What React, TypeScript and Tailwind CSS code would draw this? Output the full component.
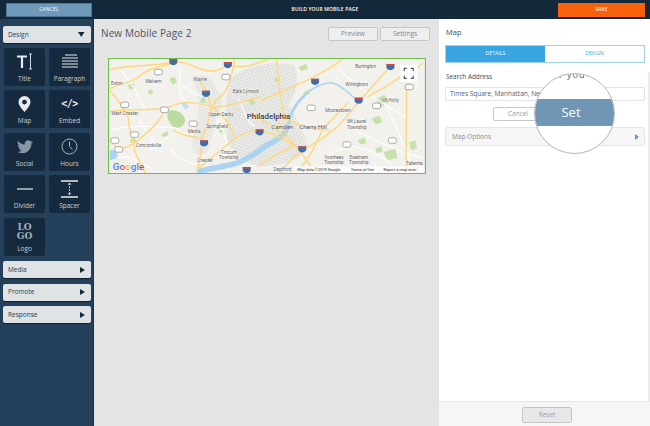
const roads = [
  "M0 11 C15 6 40 8 64 3 C80 1 90 14 105 12 C112 11 116 8 119 6 C135 10 145 6 160 0",
  "M0 30 C12 24 22 25 34 14 C44 8 55 7 64 4",
  "M0 53 C15 50 35 52 55 50 C65 46 72 43 82 44 C92 45 98 46 104 49 C122 48 136 42 152 38",
  "M90 22 C96 28 100 38 102 49 C102 60 96 70 93 80 C92 90 92 100 88 112",
  "M19 60 C18 70 24 80 25 92 C27 100 32 106 36 115",
  "M0 32 C8 40 14 50 19 60",
  "M283 8 C270 20 262 32 252 42 C244 52 236 62 229 69 C216 80 204 86 195 92 C186 98 178 106 172 115",
  "M316 4 C308 12 298 14 290 20 C280 28 270 32 260 38",
  "M152 42 C170 34 190 26 206 18 C216 12 226 8 234 0",
  "M299 29 C300 50 298 80 299 115",
  "M205 115 C200 100 190 92 180 80 C176 72 172 66 165 58",
  "M176 60 C190 68 205 70 222 72",
  "M188 115 C204 96 208 86 214 72 C224 60 232 54 240 44",
  "M88 112 C100 100 116 90 126 80 C136 74 146 70 160 74 C170 78 180 84 195 92",
  "M104 49 C112 56 120 62 126 80",
  "M64 72 C74 78 82 78 93 80",
  "M176 60 C172 40 170 20 168 0",
  "M0 80 C4 86 6 90 9 91 C25 88 30 80 40 72 C48 64 54 58 55 50",
  "M126 0 C124 14 120 26 116 34 C108 40 104 44 104 49",
  "M150 108 C160 100 170 96 184 88",
  "M150 60 C160 66 170 70 176 80",
];
const thin = [
  "M0 72 C20 66 44 68 70 70", "M12 12 C22 26 30 36 36 52", "M70 8 C72 22 66 34 78 44", "M40 92 C52 84 60 78 70 72",
  "M232 10 C244 26 268 40 300 60", "M250 74 C268 80 288 94 316 100", "M240 88 C264 90 278 98 290 114", "M276 40 C284 62 296 80 306 114",
  "M108 60 C116 74 122 86 114 100", "M60 90 C66 98 74 104 88 106", "M72 26 C80 32 86 34 92 38", "M130 40 C136 52 136 62 146 68",
  "M30 60 C34 72 44 80 46 92", "M6 100 C18 96 28 102 40 110", "M216 100 C226 92 236 88 246 92",
];
const txt = "#555";
function T({ s, x, y, size = 4.6, fill = txt, w = 400, anchor = "start" }: { s: string; x: number; y: number; size?: number; fill?: string; w?: number; anchor?: "start" | "middle" }) {
  return <text x={x} y={y} fontSize={size} fill={fill} fontWeight={w} textAnchor={anchor} fontFamily="Roboto, sans-serif" stroke="#ffffff" strokeWidth={0.5} paintOrder="stroke">{s}</text>;
}
const shields: [number, number][] = [[64, 3], [119, 6], [97, 35], [151, 74], [95, 85], [138, 112], [283, 8], [207, 23], [251, 42], [194, 91]];
const badges: [number, number][] = [[49, 13], [117, 18], [15, 46], [55, 51], [84, 65], [25, 76], [5, 82], [9, 91], [302, 28], [203, 49], [269, 47], [285, 82], [239, 86]];
const labels: [string, number, number][] = [
  ["Exton", 7, 26], ["Malvern", 44, 24], ["Wayne", 91, 22], ["Bala Cynwyd", 137, 34], ["West Chester", 15, 56], ["Upper Darby", 112, 58],
  ["Springfield", 108, 70], ["Media", 85, 75], ["Concordville", 39, 89], ["Chester", 96, 104], ["Tinicum", 120, 96], ["Township", 120, 101],
  ["Burlington", 258, 9], ["Willingboro", 249, 27], ["Moorestown", 230, 53], ["Mt Holly", 283, 43], ["Mt Laurel", 249, 65], ["Township", 249, 71],
  ["Voorhees", 226, 101], ["Township", 226, 106], ["Evesham", 251, 101], ["Township", 251, 106], ["Taberna", 307, 107],
];
function MapSvg() {
  return (
    <svg viewBox="0 0 317 115" width="100%" height="100%" className="block">
      <defs>
        <pattern id="city" width="3" height="3" patternUnits="userSpaceOnUse" patternTransform="rotate(20)">
          <rect width="3" height="3" fill="#dcdcdb" />
          <path d="M0 0.500h3M0.500 0v3" stroke="#f4f3f0" strokeWidth="0.600" />
        </pattern>
      </defs>
      <rect width="317" height="115" fill="#f3f1ec" />
      <path d="M84 18 C92 14 104 18 106 28 C112 34 116 40 112 48 C108 60 104 74 100 90 C96 100 86 100 82 88 C86 70 92 52 88 36 Z" fill="url(#city)" opacity="0.7" />
      <path d="M122 20 C140 4 165 2 186 6 C192 20 188 34 180 46 C188 60 196 72 200 90 C190 104 170 108 150 108 C136 104 122 96 118 80 C116 60 116 38 122 20 Z" fill="url(#city)" />
      <path d="M60 52 C68 50 76 56 76 62 C74 70 66 72 62 66 C58 62 56 56 60 52 Z" fill="#bcdc9f" />
      <path d="M60 20 l5 -2 l3 5 l-5 3z M18 26 l6 -1 l1 5 l-5 1z M38 33 l4 -3 l2 5 l-4 1z M91 40 l5 -2 l1 6 l-5 1z M20 82 l5 -3 l2 5 l-5 1z M52 76 l6 -3 l1 4 l-5 2z M268 40 l9 -4 l5 7 l-9 6z M264 60 l8 -3 l3 7 l-7 2z M250 82 l7 -3 l2 6 l-6 1z M268 90 l6 -2 l1 5 l-6 2z M276 94 l12 -4 l2 10 l-10 2z M302 84 l6 -2 l2 8 l-6 2z M190 8 l8 -3 l2 5 l-7 2z M195 34 l5 -3 l2 4 l-5 2z M140 42 l5 -1 l2 4 l-5 2z M165 20 l6 -2 l1 4 l-5 1z M110 72 l5 -1 l1 3 l-5 1z" fill="#c5e2ad" />
      <path d="M88 114 C100 110 115 109 128 105 C140 101 150 93 158 87 C168 83 176 78 180 66" fill="none" stroke="#a9d3f0" strokeWidth="5.500" />
      <path d="M180 66 C182 54 188 44 197 36" fill="none" stroke="#a9d3f0" strokeWidth="2.800" />
      <path d="M197 36 C206 28 216 24 224 24 C234 26 242 36 250 42" fill="none" stroke="#a9d3f0" strokeWidth="1.400" />
      <path d="M0 92 C4 90 8 94 8 100 L0 102 Z" fill="#a9d3f0" />
      <path d="M72 44 l6 -1 l2 6 l-5 2z" fill="#c4e0f2" />
      {thin.map((d, i) => <path key={i} d={d} fill="none" stroke="#ffffff" strokeWidth={1.1} />)}
      {roads.map((d, i) => <path key={i} d={d} fill="none" stroke="#fcd97f" strokeWidth={1.5} />)}
      {shields.map(([x, y]) => (
        <g key={`s${x}-${y}`}><path d={`M${x - 4} ${y - 3} h8 v4 q-4 4.500 -8 0 z`} fill="#3c6eab" /><rect x={x - 4} y={y - 3} width={8} height={1.400} fill="#d5483d" /></g>
      ))}
      {badges.map(([x, y]) => <rect key={`b${x}-${y}`} x={x - 4} y={y - 2.500} width={8} height={5.500} rx={1.800} fill="#ffffff" stroke="#777" strokeWidth={0.600} />)}
      {labels.map(([s, x, y]) => <T key={s + x + y} s={s} x={x} y={y} anchor="middle" />)}
      <T s="Philadelphia" x={138} y={61} size={8} fill="#333" w={500} />
      <T s="Camden" x={174} y={71} size={6} fill="#444" anchor="middle" />
      <T s="Cherry Hill" x={205} y={71} size={6} fill="#444" anchor="middle" />
      <T s="Deptford" x={174} y={113} anchor="middle" />
      <text x={3} y={112} fontSize={10} fontWeight={500} fontFamily="Roboto, sans-serif" stroke="#ffffff" strokeWidth={0.600} paintOrder="stroke"><tspan fill="#4285f4">G</tspan><tspan fill="#ea4335">o</tspan><tspan fill="#fbbc05">o</tspan><tspan fill="#4285f4">g</tspan><tspan fill="#34a853">l</tspan><tspan fill="#ea4335">e</tspan></text>
      <rect x={187} y={108} width={130} height={7} fill="#ffffff" opacity={0.7} />
      <text x={189} y={113} fontSize={4} fill="#333" fontFamily="Roboto, sans-serif">Map data ©2019 Google</text>
      <text x={243} y={113} fontSize={4} fill="#333" fontFamily="Roboto, sans-serif">Terms of Use</text>
      <text x={276} y={113} fontSize={4} fill="#333" fontFamily="Roboto, sans-serif">Report a map error</text>
      <rect x={293} y={6} width={17} height={17} fill="#ffffff" />
      <path d="M297 12 v-2.500 h2.500 M303.500 9.500 h2.500 v2.500 M306 17 v2.500 h-2.500 M299.500 19.500 h-2.500 v-2.500" fill="none" stroke="#555" strokeWidth={1.200} />
    </svg>
  );
}
function Tile({ label, children }: { label: string; children: React.ReactNode }) {
  return (
    <div className="w-[41px] h-[38px] bg-[#152a3f] rounded-[2px] flex flex-col items-center justify-between pt-[4px] pb-[3px]">
      <div className="h-[20px] flex items-center justify-center text-[#e6ebef]">{children}</div>
      <span className="text-[6.5px] leading-[8px] text-[#c9d1d8]">{label}</span>
    </div>
  );
}
function Section({ label, open }: { label: string; open?: boolean }) {
  return (
    <div className="h-[17px] w-[88px] rounded-[2px] bg-[#dfe3e6] flex items-center justify-between pl-[5px] pr-[6px] text-[6.5px] text-[#2a3a4a] shadow-[0_1px_0_#0f2030]">
      <span>{label}</span>
      {open ? (
        <svg width="7" height="5" viewBox="0 0 7 5"><path d="M0 0h6.500L3.250 5z" fill="#16293c" /></svg>
      ) : (
        <svg width="5" height="6" viewBox="0 0 5 6"><path d="M0 0l5 3-5 3z" fill="#16293c" /></svg>
      )}
    </div>
  );
}
export default function App() {
  return (
    <div className="w-[650px] h-[426px] overflow-hidden flex flex-col font-['Open_Sans','Noto_Sans',sans-serif] bg-[#e4e4e4] relative">
      <header className="h-[19px] shrink-0 bg-[#14283c] flex items-center justify-between pl-[6px] pr-[5px]">
        <div className="w-[86px] h-[14px] bg-[#7099b9] border border-[#4d7797] text-white text-[5px] flex items-center justify-center tracking-wide">CANCEL</div>
        <div className="text-white text-[5px] font-semibold tracking-wide">BUILD YOUR MOBILE PAGE</div>
        <div className="w-[87px] h-[14px] bg-[#f8610b] text-white text-[5px] font-semibold flex items-center justify-center">SAVE</div>
      </header>
      <div className="flex flex-1 min-h-0">
        <aside className="w-[94px] shrink-0 bg-[#25405a] border-r border-[#1c3247] pt-[7px] pl-[3px] flex flex-col">
          <Section label="Design" open />
          <div className="grid grid-cols-[41px_41px] gap-x-[4px] gap-y-[4.500px] pl-[1px] mt-[4.500px]">
            <Tile label="Title">
              <svg width="18" height="17" viewBox="0 0 18 17" fill="none" stroke="currentColor"><path d="M1 3.500h10M6 3.500V15" strokeWidth="2.200" /><path d="M13 1h3M14.500 1v15M13 16h3" strokeWidth="0.900" /></svg>
            </Tile>
            <Tile label="Paragraph">
              <svg width="16" height="15" viewBox="0 0 16 15" stroke="currentColor" strokeWidth="1.200"><path d="M3 1h12M0 4h16M0 7h16M0 10h16M0 13h16" /></svg>
            </Tile>
            <Tile label="Map">
              <svg width="13" height="16" viewBox="0 0 13 16"><path fillRule="evenodd" d="M6.500 0a6 6 0 0 1 6 6c0 3.500-4 7.500-6 10-2-2.500-6-6.500-6-10a6 6 0 0 1 6-6zm0 3.700a2.400 2.400 0 1 0 0 4.800 2.400 2.400 0 0 0 0-4.800z" fill="currentColor" /></svg>
            </Tile>
            <Tile label="Embed">
              <span className="text-[10px] font-bold leading-none font-['DejaVu_Sans_Mono',monospace] tracking-[-0.5px]">{"</>"}</span>
            </Tile>
            <Tile label="Social">
              <svg width="16" height="14" viewBox="0 0 24 20"><path d="M24 2.400a9.800 9.800 0 0 1-2.800.8A4.900 4.900 0 0 0 23.300.5a9.800 9.800 0 0 1-3.100 1.200 4.900 4.900 0 0 0-8.400 4.500A14 14 0 0 1 1.700.9a4.900 4.900 0 0 0 1.500 6.600 4.900 4.900 0 0 1-2.200-.6v.1a4.900 4.900 0 0 0 3.900 4.800 4.900 4.900 0 0 1-2.200.1 4.900 4.900 0 0 0 4.600 3.400A9.900 9.900 0 0 1 0 17.300 13.900 13.900 0 0 0 7.500 19.500c9.100 0 14-7.500 14-14v-.6A10 10 0 0 0 24 2.400z" fill="#8a97a3" /></svg>
            </Tile>
            <Tile label="Hours">
              <svg width="17" height="17" viewBox="0 0 17 17" fill="none" stroke="#a9b4bd"><circle cx="8.500" cy="8.500" r="7.500" strokeWidth="1" /><path d="M8.500 3.500v5l3 3" strokeWidth="1" /></svg>
            </Tile>
            <Tile label="Divider">
              <svg width="16" height="2" viewBox="0 0 16 2"><rect width="16" height="1.200" y="0.400" fill="currentColor" /></svg>
            </Tile>
            <Tile label="Spacer">
              <svg width="17" height="18" viewBox="0 0 17 18" stroke="currentColor" fill="none"><path d="M0 1h17M0 17h17" strokeWidth="1.300" /><path d="M8.500 3v12" strokeWidth="0.800" strokeDasharray="2 1" /><path d="M6.800 5l1.700-2 1.700 2M6.800 13l1.700 2 1.700-2" strokeWidth="0.700" /></svg>
            </Tile>
            <Tile label="Logo">
              <span className="font-['DejaVu_Serif',serif] font-bold text-[9px] leading-[9px] text-center text-[#a9b1b8]">LO<br />GO</span>
            </Tile>
          </div>
          <div className="flex flex-col gap-[5.700px] mt-[5.500px]">
            <Section label="Media" />
            <Section label="Promote" />
            <Section label="Response" />
          </div>
        </aside>
        <main className="w-[345px] shrink-0 pl-[7px] pr-[9px] pt-[7px]">
          <div className="flex items-center justify-between h-[15px]">
            <h1 className="text-[10px] text-[#4b5660] tracking-[0.1px]">New Mobile Page 2</h1>
            <div className="flex gap-[2px]">
              <div className="w-[50px] h-[14px] bg-[#eeeeee] border border-[#c6c6c6] rounded-[2px] text-[6.500px] text-[#7c8791] flex items-center justify-center">Preview</div>
              <div className="w-[50px] h-[14px] bg-[#eeeeee] border border-[#c6c6c6] rounded-[2px] text-[6.500px] text-[#7c8791] flex items-center justify-center">Settings</div>
            </div>
          </div>
          <div className="mt-[17px] ml-[7px] w-[318px] h-[116px] border border-[#6fbb4b] overflow-hidden">
            <MapSvg />
          </div>
        </main>
        <section className="flex-1 bg-white flex flex-col relative">
          <div className="flex-1 pl-[7px] pr-[5px] pt-[7px]">
            <h2 className="text-[7.500px] leading-[13px] text-[#3a4a58]">Map</h2>
            <div className="mt-[6px] -ml-[1px] flex h-[18px] border border-[#9fd0ee]">
              <div className="w-[99px] bg-[#38a5e0] text-white text-[5px] flex items-center justify-center tracking-wide">DETAILS</div>
              <div className="flex-1 bg-white text-[#38a5e0] text-[5px] flex items-center justify-center tracking-wide">DESIGN</div>
            </div>
            <div className="mt-[8px] text-[6.400px] leading-[12px] text-[#3a4a58]">Search Address</div>
            <div className="mt-[4px] -ml-[1px] h-[14px] border border-[#e2e2e2] rounded-[2px] flex items-center pl-[4px] text-[6.500px] text-[#55616c] whitespace-nowrap">Times Square, Manhattan, New York</div>
            <div className="mt-[6px] pl-[47px]">
              <div className="w-[50px] h-[14px] border border-[#c2c8cc] rounded-[2px] flex items-center justify-center text-[6.500px] text-[#8f99a3]">Cancel</div>
            </div>
            <div className="mt-[6px] -ml-[1px] h-[19px] bg-[#f6f6f6] border border-[#e6e6e6] rounded-[2px] flex items-center justify-between pl-[6px] pr-[5px] text-[6.500px] text-[#7c8f9f]">
              <span>Map Options</span>
              <svg width="4" height="6" viewBox="0 0 4 6"><path d="M0 0l4 3-4 3z" fill="#6f97b5" /></svg>
            </div>
          </div>
          <div className="h-[25px] shrink-0 bg-[#f6f6f6] border-t border-[#e6e6e6] flex items-start justify-center pt-[5px] pl-[5px]">
            <div className="w-[50px] h-[16px] bg-[#e8e8e8] border border-[#c6c6c6] rounded-[2px] flex items-center justify-center text-[6.500px] text-[#9aa3aa]">Reset</div>
          </div>
          <div className="absolute right-0 top-[53px] bottom-[25px] w-[2px] bg-[#ececec]" />
          <div className="absolute left-[95px] top-[54px] w-[81px] h-[81px] rounded-full bg-white border border-[#b5b5b5] overflow-hidden flex flex-col items-center">
            <div className="h-[25px] w-full relative overflow-hidden">
              <span className="absolute top-[-4px] left-[24px] text-[9px] leading-[10px] tracking-[1px] text-[#555]">r you</span>
            </div>
            <div className="h-[27px] w-full bg-[#6f97b5] text-white text-[13px] flex items-center justify-center pr-[7px]">Set</div>
          </div>
        </section>
      </div>
    </div>
  );
}
